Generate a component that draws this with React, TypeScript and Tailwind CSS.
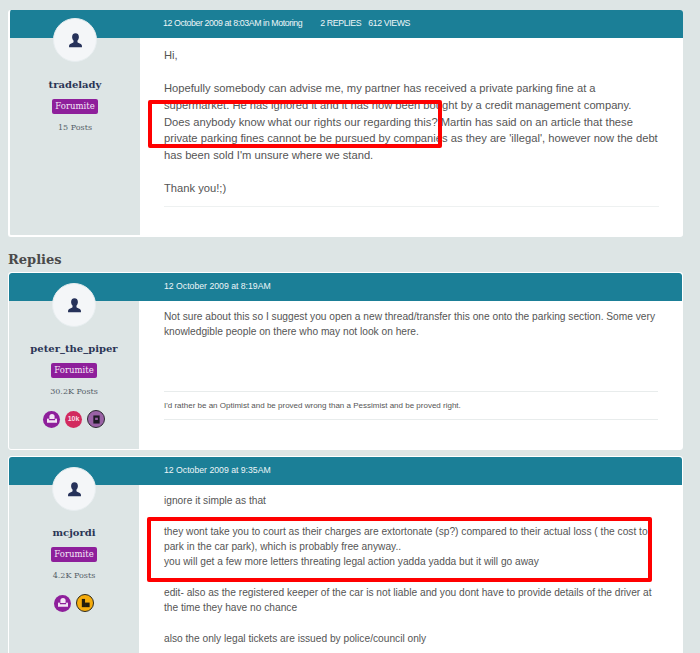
const sans = "font-['Liberation_Sans',Arial,sans-serif]";
const slab = "font-['DejaVu_Serif',serif]";

const PersonIcon = () => (
  <svg viewBox="0 0 20 20" className="w-[17px] h-[17px]" fill="#26325a">
    <path d="M10 1.5c-2.6 0-4 1.9-4 4.4 0 1.7.7 3.3 1.7 4.2v1.3c0 .8-.5 1.2-1.4 1.6-1.9.8-3.6 1.4-3.9 3.1v1.9h15.2v-1.9c-.3-1.7-2-2.3-3.9-3.1-.9-.4-1.4-.8-1.4-1.6v-1.3c1-.9 1.7-2.5 1.7-4.2 0-2.5-1.4-4.4-4-4.4z" />
  </svg>
);

const ChairBadge = () => (
  <span className="w-[17px] h-[17px] rounded-full bg-[#8e1f9b] flex items-center justify-center">
    <svg viewBox="0 0 12 12" className="w-[12px] h-[12px]" fill="#f3e6f5">
      <path d="M6 1C4.3 1 3.4 2 3.4 3.4V6h5.2V3.4C8.6 2 7.7 1 6 1z" />
      <path d="M1.8 5.6c.7 0 1.1.4 1.1 1v.6h6.2v-.6c0-.6.4-1 1.1-1 .5 0 .8.4.8.9v3.2H1v-3.2c0-.5.3-.9.8-.9z" />
    </svg>
  </span>
);

const TenKBadge = () => (
  <span className={`w-[17px] h-[17px] rounded-full bg-[#d22a5e] flex items-center justify-center text-[7px] font-bold text-[#f7dfe6] ${sans}`}>
    10k
  </span>
);

const BookBadge = () => (
  <span className="w-[18px] h-[18px] rounded-full bg-[#9a62a6] border-[1.5px] border-[#2e2a33] flex items-center justify-center">
    <svg viewBox="0 0 10 10" className="w-[9px] h-[9px]">
      <rect x="1.5" y="0.5" width="7" height="9" fill="#1e1a26" />
      <rect x="3.5" y="3" width="3" height="2.5" fill="#9a62a6" />
    </svg>
  </span>
);

const ParkBadge = () => (
  <span className="w-[18px] h-[18px] rounded-full bg-[#f5ac0c] border-[1.5px] border-[#2e2a1c] flex items-center justify-center">
    <svg viewBox="0 0 12 12" className="w-[11px] h-[11px]" fill="#241d0c">
      <rect x="2" y="1" width="3.5" height="9" />
      <rect x="5.5" y="5" width="5" height="5" />
    </svg>
  </span>
);

interface SidebarProps {
  name: string;
  posts: string;
  badges?: React.ReactNode;
  avatarClass?: string;
}

const Sidebar = ({ name, posts, badges, avatarClass = "-mt-[18px] mb-[14px]" }: SidebarProps) => (
  <aside className="w-[130px] shrink-0 bg-[#dde5e5] flex flex-col items-center">
    <div className={`${avatarClass} w-[44px] h-[44px] rounded-full bg-[#f4f6f8] border border-[#e8eef0] flex items-center justify-center`}>
      <PersonIcon />
    </div>
    <div className={`text-[10px] leading-[16px] font-bold text-[#2b3556] ${slab}`}>{name}</div>
    <div className={`mt-[6px] h-[15px] px-[3px] rounded-[2px] bg-[#8e1f9b] text-[#f5e9f7] text-[8.5px] leading-[15px] ${slab}`}>
      Forumite
    </div>
    <div className={`mt-[8px] text-[8px] leading-[12px] text-[#555f68] ${slab}`}>{posts}</div>
    {badges && <div className="mt-[12px] flex items-center gap-[5px]">{badges}</div>}
  </aside>
);

const Header = ({ children }: { children: React.ReactNode }) => (
  <div className={`h-[28px] bg-[#1b7f97] rounded-t-[3px] pl-[155px] flex items-center text-[8.7px] font-medium text-[#eef6f8] ${sans}`}>
    {children}
  </div>
);

export default function App() {
  return (
    <div className={`w-[700px] h-[653px] overflow-hidden relative bg-[#dde5e5] pl-[8px] pr-[17px] pt-[10px] ${sans}`}>
      {/* question */}
      <section className="h-[227px] rounded-[3px] border-b-2 border-l-2 border-white bg-white flex flex-col overflow-hidden">
        <div className="-ml-[2px]">
          <div className="h-[28px] bg-[#1b7f97] pl-[155px] flex items-center text-[8.8px] tracking-[-0.4px] text-[#eef6f8]">
            <span>12 October 2009 at 8:03AM in Motoring</span>
            <span className="ml-[18px]">2 REPLIES</span>
            <span className="ml-[7px]">612 VIEWS</span>
          </div>
        </div>
        <div className="flex flex-1 min-h-0">
          <Sidebar name="tradelady" posts="15 Posts" avatarClass="-mt-[20px] mb-[15px]" />
          <div className="flex-1 pt-[9px] pl-[24px] pr-[24px] text-[11.2px] leading-[16.67px] text-[#555]">
            <p>
              Hi,
              <br />
              <br />
              Hopefully somebody can advise me, my partner has received a private parking fine at a supermarket. He has ignored it and it has now been bought by a credit management company. Does anybody know what our rights our regarding this? Martin has said on an article that these private parking fines cannot be be pursued by companies as they are 'illegal', however now the debt has been sold I'm unsure where we stand.
              <br />
              <br />
              Thank you!;)
            </p>
            <div className="mt-[9px] border-t border-[#eef1f1]" />
          </div>
        </div>
      </section>

      <h2 className={`mt-[12px] h-[23px] text-[13px] leading-[21px] font-bold text-[#4a4a4a] ${slab}`}>Replies</h2>

      {/* reply 1 */}
      <section className="h-[178px] rounded-[3px] border border-white bg-white flex flex-col overflow-hidden">
        <Header>12 October 2009 at 8:19AM</Header>
        <div className="flex flex-1 min-h-0">
          <Sidebar
            name="peter_the_piper"
            posts="30.2K Posts"
            badges={
              <>
                <ChairBadge />
                <TenKBadge />
                <BookBadge />
              </>
            }
          />
          <div className="flex-1 pt-[8px] pl-[25px] pr-[24px] text-[10.2px] leading-[15.3px] text-[#555]">
            <p className="h-[82px]">
              Not sure about this so I suggest you open a new thread/transfer this one onto the parking section. Some very knowledgible people on there who may not look on here.
            </p>
            <div className="border-y border-[#e8ecec] h-[29px] flex items-center text-[8px] text-[#555]">
              I'd rather be an Optimist and be proved wrong than a Pessimist and be proved right.
            </div>
          </div>
        </div>
      </section>

      {/* reply 2 */}
      <section className="mt-[6px] rounded-[3px] border border-white bg-white flex flex-col h-[300px]">
        <Header>12 October 2009 at 9:35AM</Header>
        <div className="flex flex-1 min-h-0">
          <Sidebar
            name="mcjordi"
            posts="4.2K Posts"
            badges={
              <>
                <ChairBadge />
                <ParkBadge />
              </>
            }
          />
          <div className="flex-1 pt-[8px] pl-[25px] pr-[24px] text-[10.2px] leading-[15.3px] text-[#555]">
            <p>
              ignore it simple as that
              <br />
              <br />
              they wont take you to court as their charges are extortonate (sp?) compared to their actual loss ( the cost to park in the car park), which is probably free anyway..
              <br />
              you will get a few more letters threating legal action yadda yadda but it will go away
              <br />
              <br />
              edit- also as the registered keeper of the car is not liable and you dont have to provide details of the driver at the time they have no chance
              <br />
              <br />
              also the only legal tickets are issued by police/council only
            </p>
          </div>
        </div>
      </section>

      {/* red annotations drawn over the screenshot */}
      <div className="absolute left-[148px] top-[100px] w-[294px] h-[48px] border-[4px] border-[#f00] rounded-[2px]" />
      <div className="absolute left-[147px] top-[517px] w-[505px] h-[65px] border-[4px] border-[#f00] rounded-[2px]" />
    </div>
  );
}
